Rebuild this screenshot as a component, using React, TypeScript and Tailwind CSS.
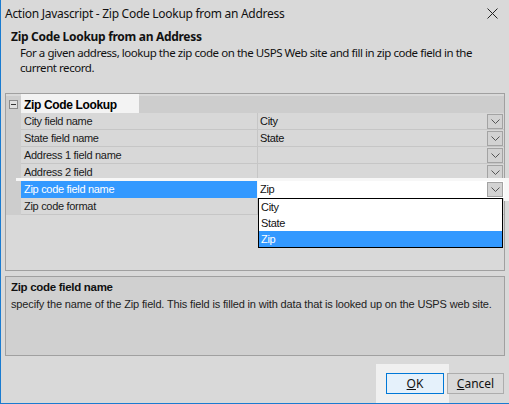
import React from 'react';

const rows = [
  { name: 'City field name', value: 'City' },
  { name: 'State field name', value: 'State' },
  { name: 'Address 1 field name', value: '' },
  { name: 'Address 2 field', value: '' },
  { name: 'Zip code field name', value: 'Zip', selected: true },
  { name: 'Zip code format', value: '', noButton: true },
];

function Chevron() {
  return (
    <div className="w-[16px] h-[15px] border border-[#a3a3a3] bg-[#d2d2d2] flex items-center justify-center">
      <svg width="9" height="5" viewBox="0 0 9 5">
        <path d="M0.5 0.5 L4.5 4.5 L8.5 0.5" fill="none" stroke="#555" strokeWidth="1" />
      </svg>
    </div>
  );
}

function GridRow({ name, value, selected, noButton }: { name: string; value: string; selected?: boolean; noButton?: boolean }) {
  return (
    <div className="relative flex h-[17px]">
      {selected && <div className="absolute top-[-3px] bottom-[-3px] left-[10px] right-[-6px] bg-[#f7f7f7]" />}
      <div className="relative w-[15px] bg-[#cdcdcd]" />
      <div
        className={`relative w-[236px] pl-[3px] flex items-center border-b ${
          selected ? 'bg-[#3399ff] text-white border-[#3399ff]' : 'bg-[#d8d8d8] text-[#1a1a1a] border-[#c6c6c6]'
        }`}
      >
        {name}
      </div>
      <div className={`relative w-px ${selected ? 'bg-[#f7f7f7]' : 'bg-[#c6c6c6]'}`} />
      <div
        className={`relative flex-1 flex items-center pl-[2px] pr-[1px] border-b ${
          selected ? 'bg-white border-white' : 'bg-[#d8d8d8] border-[#c6c6c6]'
        }`}
      >
        <span className="flex-1">{value}</span>
        {!noButton && <Chevron />}
      </div>
    </div>
  );
}

export default function App() {
  return (
    <div
      className="w-[509px] h-[404px] bg-[#d9d9d9] border-l border-b border-[#1a7bd0] flex flex-col text-[#111] overflow-hidden"
      style={{ fontFamily: '"Noto Sans", sans-serif' }}
    >
      {/* title bar */}
      <div className="h-[27px] flex items-center pl-[4px] pr-[11px] text-[12px] tracking-[-0.28px]">
        <span className="flex-1">Action Javascript - Zip Code Lookup from an Address</span>
        <svg width="11" height="11" viewBox="0 0 11 11">
          <path d="M0.5 0.5 L10.5 10.5 M10.5 0.5 L0.5 10.5" stroke="#222" strokeWidth="1" />
        </svg>
      </div>

      {/* header */}
      <div className="pl-[10px] text-[12px] font-bold leading-[16px] mt-[2px] tracking-[-0.3px]">Zip Code Lookup from an Address</div>
      <div className="pl-[19px] w-[495px] text-[11.5px] leading-[15px] tracking-[-0.45px]">
        For a given address, lookup the zip code on the USPS Web site and fill in zip code field in the current record.
      </div>

      {/* property grid */}
      <div
        className="mt-[18px] ml-[4px] w-[500px] h-[178px] border border-[#a0a0a0] bg-[#d9d9d9] pt-[2px] text-[11px] tracking-[-0.3px]"
        style={{ fontFamily: '"Liberation Sans", sans-serif' }}
      >
        <div className="flex h-[17px] bg-[#cdcdcd]">
          <div className="w-[15px] flex items-center justify-center">
            <div className="w-[9px] h-[9px] border border-[#8a8a8a] bg-[#e0e0e0] flex items-center justify-center">
              <div className="w-[5px] h-px bg-[#333]" />
            </div>
          </div>
          <div className="relative">
            <div className="absolute top-[-2px] bottom-[-1px] left-0 w-[118px] bg-[#f3f3f3]" />
            <div className="relative pl-[3px] h-full flex items-center font-bold text-[12px] text-black tracking-[-0.35px]">Zip Code Lookup</div>
          </div>
        </div>
        {rows.map((r) => (
          <GridRow key={r.name} {...r} />
        ))}
        <div className="relative">
          <div className="absolute top-[-17px] left-[252px] w-[245px] border border-black bg-white z-10">
            <div className="h-[16px] pl-[2px] flex items-center">City</div>
            <div className="h-[16px] pl-[2px] flex items-center">State</div>
            <div className="h-[16px] pl-[2px] flex items-center bg-[#3399ff] text-white">Zip</div>
          </div>
        </div>
      </div>

      {/* description panel */}
      <div
        className="mt-[5px] ml-[4px] w-[500px] h-[80px] border border-[#a0a0a0] bg-[#d0d0d0] px-[5px] pt-[3px] text-[11px] tracking-[-0.15px]"
        style={{ fontFamily: '"Liberation Sans", sans-serif' }}
      >
        <div className="font-bold text-[11.5px] leading-[15px] tracking-[-0.3px]">Zip code field name</div>
        <div className="mt-[2px] leading-[14px] text-[#222]">
          specify the name of the Zip field. This field is filled in with data that is looked up on the USPS web site.
        </div>
      </div>

      {/* buttons */}
      <div className="flex-1 flex justify-end items-end pr-[5px]">
        <div className="bg-[#f0f0f0] h-[39px] w-[73px] flex items-start pt-[9px] pl-[10px] -mr-[2px]">
          <button className="w-[58px] h-[21px] border border-[#0078d7] bg-[#e5f1fb] text-[12px] leading-none">
            <span className="underline">O</span>K
          </button>
        </div>
        <div className="h-[39px] flex items-start pt-[9px]">
          <button className="w-[57px] h-[21px] border border-[#adadad] bg-[#d9d9d9] text-[12px] leading-none">
            <span className="underline">C</span>ancel
          </button>
        </div>
      </div>
    </div>
  );
}
